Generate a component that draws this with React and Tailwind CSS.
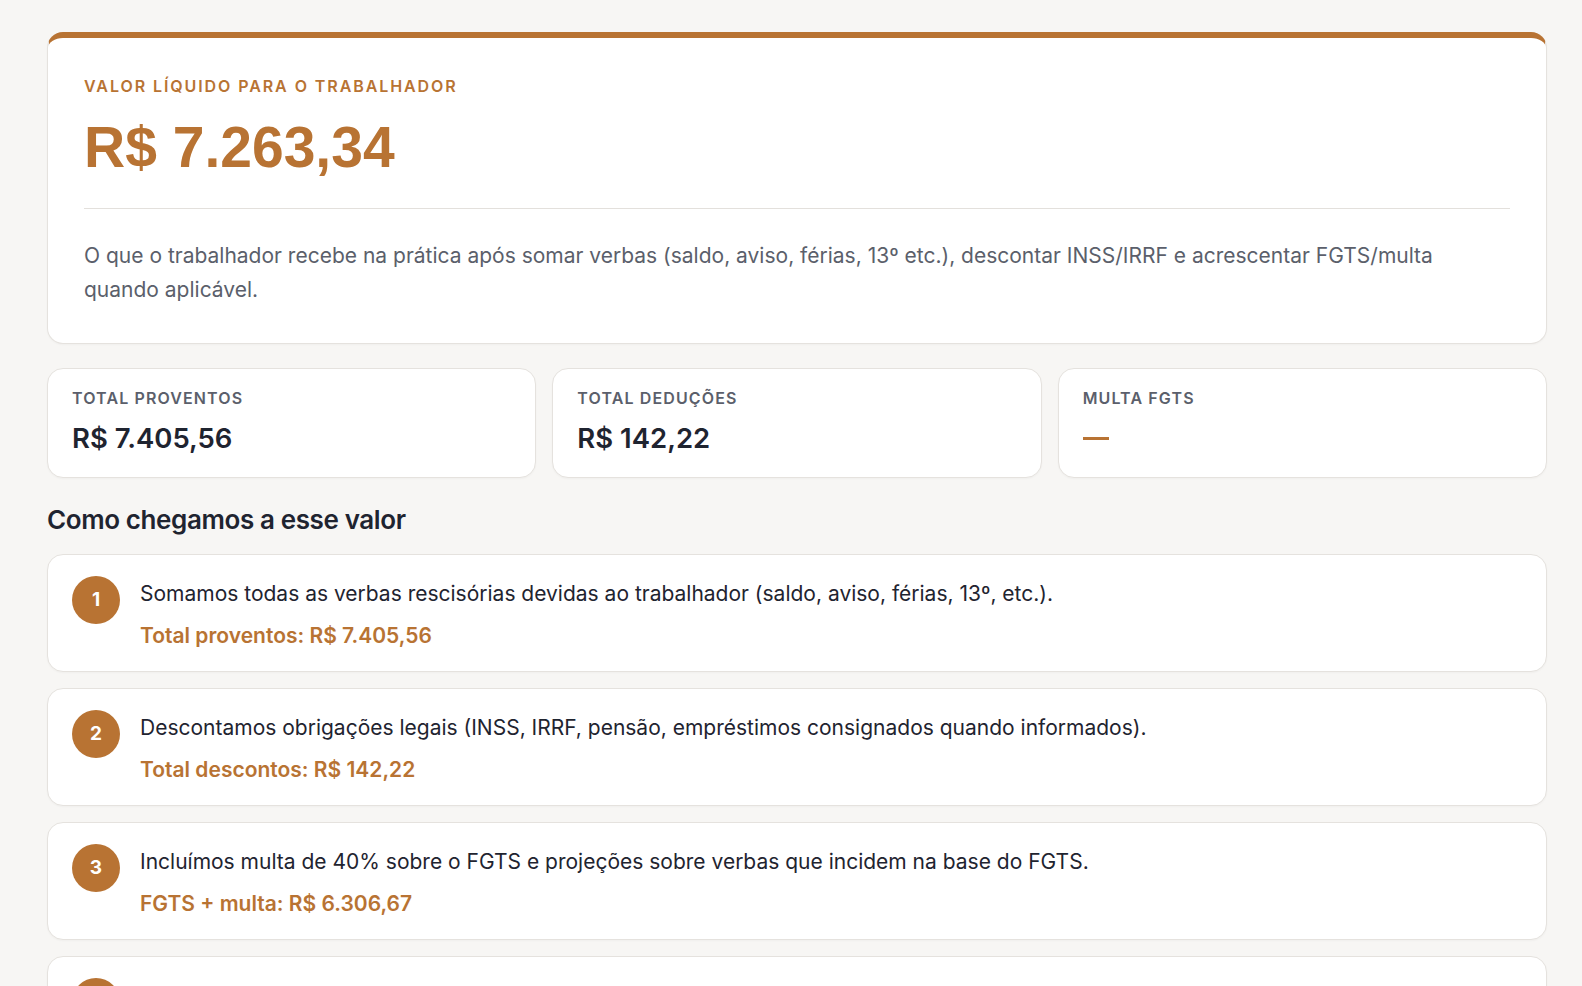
const steps = [
  {
    n: 1,
    text: "Somamos todas as verbas rescisórias devidas ao trabalhador (saldo, aviso, férias, 13º, etc.).",
    value: "Total proventos: R$ 7.405,56",
  },
  {
    n: 2,
    text: "Descontamos obrigações legais (INSS, IRRF, pensão, empréstimos consignados quando informados).",
    value: "Total descontos: R$ 142,22",
  },
  {
    n: 3,
    text: "Incluímos multa de 40% sobre o FGTS e projeções sobre verbas que incidem na base do FGTS.",
    value: "FGTS + multa: R$ 6.306,67",
  },
  {
    n: 4,
    text: "Chegamos ao valor líquido final que o trabalhador deve receber.",
    value: "Valor líquido: R$ 7.263,34",
  },
];

const stats = [
  { label: "Total proventos", value: "R$ 7.405,56" },
  { label: "Total deduções", value: "R$ 142,22" },
  { label: "Multa FGTS", value: null },
];

export default function App() {
  return (
    <div className="min-h-screen bg-[#f7f6f4] pt-8 pb-10 font-['Inter',sans-serif] text-[#1f2430]">
      <div className="ml-[47px] w-[1500px]">
        <div className="rounded-2xl border border-[#e5e2de] border-t-[6px] border-t-[#b87333] bg-white px-9 pt-[38px] pb-[36px] shadow-[0_1px_2px_rgba(0,0,0,0.03)]">
          <p className="text-[16px] leading-5 font-semibold uppercase tracking-[0.12em] text-[#b87333]">
            Valor líquido para o trabalhador
          </p>
          <p className="mt-[23px] text-[57px] leading-none font-bold text-[#b87333] font-['Liberation_Sans',Arial,sans-serif]">
            R$ 7.263,34
          </p>
          <div className="mt-8 h-px bg-[#e3e0dc]" />
          <p className="mt-[30px] text-[21px] leading-[34px] text-[#5b5f6b]">
            O que o trabalhador recebe na prática após somar verbas (saldo, aviso, férias, 13º etc.), descontar INSS/IRRF e acrescentar FGTS/multa quando aplicável.
          </p>
        </div>

        <div className="mt-6 grid grid-cols-3 gap-4">
          {stats.map((s) => (
            <div
              key={s.label}
              className="rounded-2xl border border-[#e5e2de] bg-white px-6 pt-[19px] pb-[23px] shadow-[0_1px_2px_rgba(0,0,0,0.03)]"
            >
              <p className="text-[16px] leading-5 font-semibold uppercase tracking-[0.07em] text-[#5b5f6b]">
                {s.label}
              </p>
              <div className="mt-3.5 h-8 flex items-center">
                {s.value ? (
                  <p className="text-[27.5px] leading-8 font-semibold text-[#1f2430]">{s.value}</p>
                ) : (
                  <div className="h-[3px] w-[26px] bg-[#b87333]" />
                )}
              </div>
            </div>
          ))}
        </div>

        <h2 className="mt-[26px] text-[26px] leading-8 font-semibold tracking-[-0.015em] text-[#1f2430]">
          Como chegamos a esse valor
        </h2>

        <div className="mt-[18px] flex flex-col gap-4">
          {steps.map((s) => (
            <div
              key={s.n}
              className="flex items-start gap-5 rounded-2xl border border-[#e5e2de] bg-white px-6 pt-[21px] pb-[21px] shadow-[0_1px_2px_rgba(0,0,0,0.03)]"
            >
              <div className="flex h-12 w-12 shrink-0 items-center justify-center rounded-full bg-[#b87333] text-[19px] font-bold text-white">
                {s.n}
              </div>
              <div className="mt-1">
                <p className="text-[21px] leading-7 text-[#1f2430]">{s.text}</p>
                <p className="mt-[14px] text-[21px] leading-7 font-semibold text-[#b87333]">{s.value}</p>
              </div>
            </div>
          ))}
        </div>
      </div>
    </div>
  );
}
